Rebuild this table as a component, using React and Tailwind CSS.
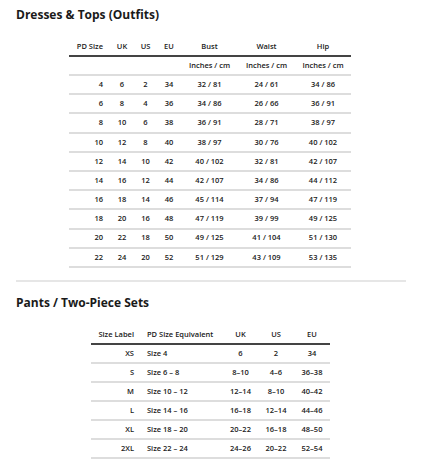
const dresses = [
  ['4', '6', '2', '34', '32 / 81', '24 / 61', '34 / 86'],
  ['6', '8', '4', '36', '34 / 86', '26 / 66', '36 / 91'],
  ['8', '10', '6', '38', '36 / 91', '28 / 71', '38 / 97'],
  ['10', '12', '8', '40', '38 / 97', '30 / 76', '40 / 102'],
  ['12', '14', '10', '42', '40 / 102', '32 / 81', '42 / 107'],
  ['14', '16', '12', '44', '42 / 107', '34 / 86', '44 / 112'],
  ['16', '18', '14', '46', '45 / 114', '37 / 94', '47 / 119'],
  ['18', '20', '16', '48', '47 / 119', '39 / 99', '49 / 125'],
  ['20', '22', '18', '50', '49 / 125', '41 / 104', '51 / 130'],
  ['22', '24', '20', '52', '51 / 129', '43 / 109', '53 / 135'],
];

const pants = [
  ['XS', 'Size 4', '6', '2', '34'],
  ['S', 'Size 6 – 8', '8–10', '4–6', '36–38'],
  ['M', 'Size 10 – 12', '12–14', '8–10', '40–42'],
  ['L', 'Size 14 – 16', '16–18', '12–14', '44–46'],
  ['XL', 'Size 18 – 20', '20–22', '16–18', '48–50'],
  ['2XL', 'Size 22 – 24', '24–26', '20–22', '52–54'],
];

const dressCols = ['w-[41px] text-right pr-[7px]', 'w-[24px] text-center', 'w-[23px] text-center', 'w-[24px] text-center', 'w-[57px] text-center', 'w-[57px] text-center', 'w-[56px] text-center'];
const pantsCols = ['w-[49px] text-right pr-[6px]', 'w-[83px] text-left pl-[7px]', 'w-[35px] text-center', 'w-[36px] text-center', 'w-[36px] text-center'];

export default function App() {
  return (
    <div className="w-[426px] h-[464px] bg-white text-[#1a1a1a] px-4 pt-[6px] overflow-hidden" style={{ fontFamily: '"Open Sans", sans-serif' }}>
      <h2 className="text-[12px] font-bold leading-[18px]">Dresses &amp; Tops (Outfits)</h2>

      <table className="ml-[53px] mt-[14px] border-collapse table-fixed text-[7.5px] font-semibold">
        <thead>
          <tr className="h-[18px] border-b-2 border-[#444]">
            {['PD Size', 'UK', 'US', 'EU', 'Bust', 'Waist', 'Hip'].map((h, i) => (
              <th key={h} className={`${dressCols[i]} font-semibold align-middle`}>{h}</th>
            ))}
          </tr>
        </thead>
        <tbody>
          <tr className="h-[19px] border-b-2 border-[#ddd]">
            <td colSpan={4}></td>
            <td className="text-center">Inches / cm</td>
            <td className="text-center">Inches / cm</td>
            <td className="text-center">Inches / cm</td>
          </tr>
          {dresses.map((r) => (
            <tr key={r[0]} className="h-[19.2px] border-b-2 border-[#ddd]">
              {r.map((c, i) => (
                <td key={i} className={dressCols[i]}>{c}</td>
              ))}
            </tr>
          ))}
        </tbody>
      </table>

      <div className="mt-[12px] h-[2px] bg-[#e6e6e6] w-[390px]"></div>

      <h2 className="mt-[12px] text-[12px] font-bold leading-[18px]">Pants / Two-Piece Sets</h2>

      <table className="ml-[75px] mt-[14px] border-collapse table-fixed text-[7.5px] font-semibold">
        <thead>
          <tr className="h-[18px] border-b-2 border-[#444]">
            {['Size Label', 'PD Size Equivalent', 'UK', 'US', 'EU'].map((h, i) => (
              <th key={h} className={`${pantsCols[i]} font-semibold align-middle`}>{h}</th>
            ))}
          </tr>
        </thead>
        <tbody>
          {pants.map((r) => (
            <tr key={r[0]} className="h-[19.1px] border-b-2 border-[#ddd]">
              {r.map((c, i) => (
                <td key={i} className={pantsCols[i]}>{c}</td>
              ))}
            </tr>
          ))}
        </tbody>
      </table>
    </div>
  );
}
